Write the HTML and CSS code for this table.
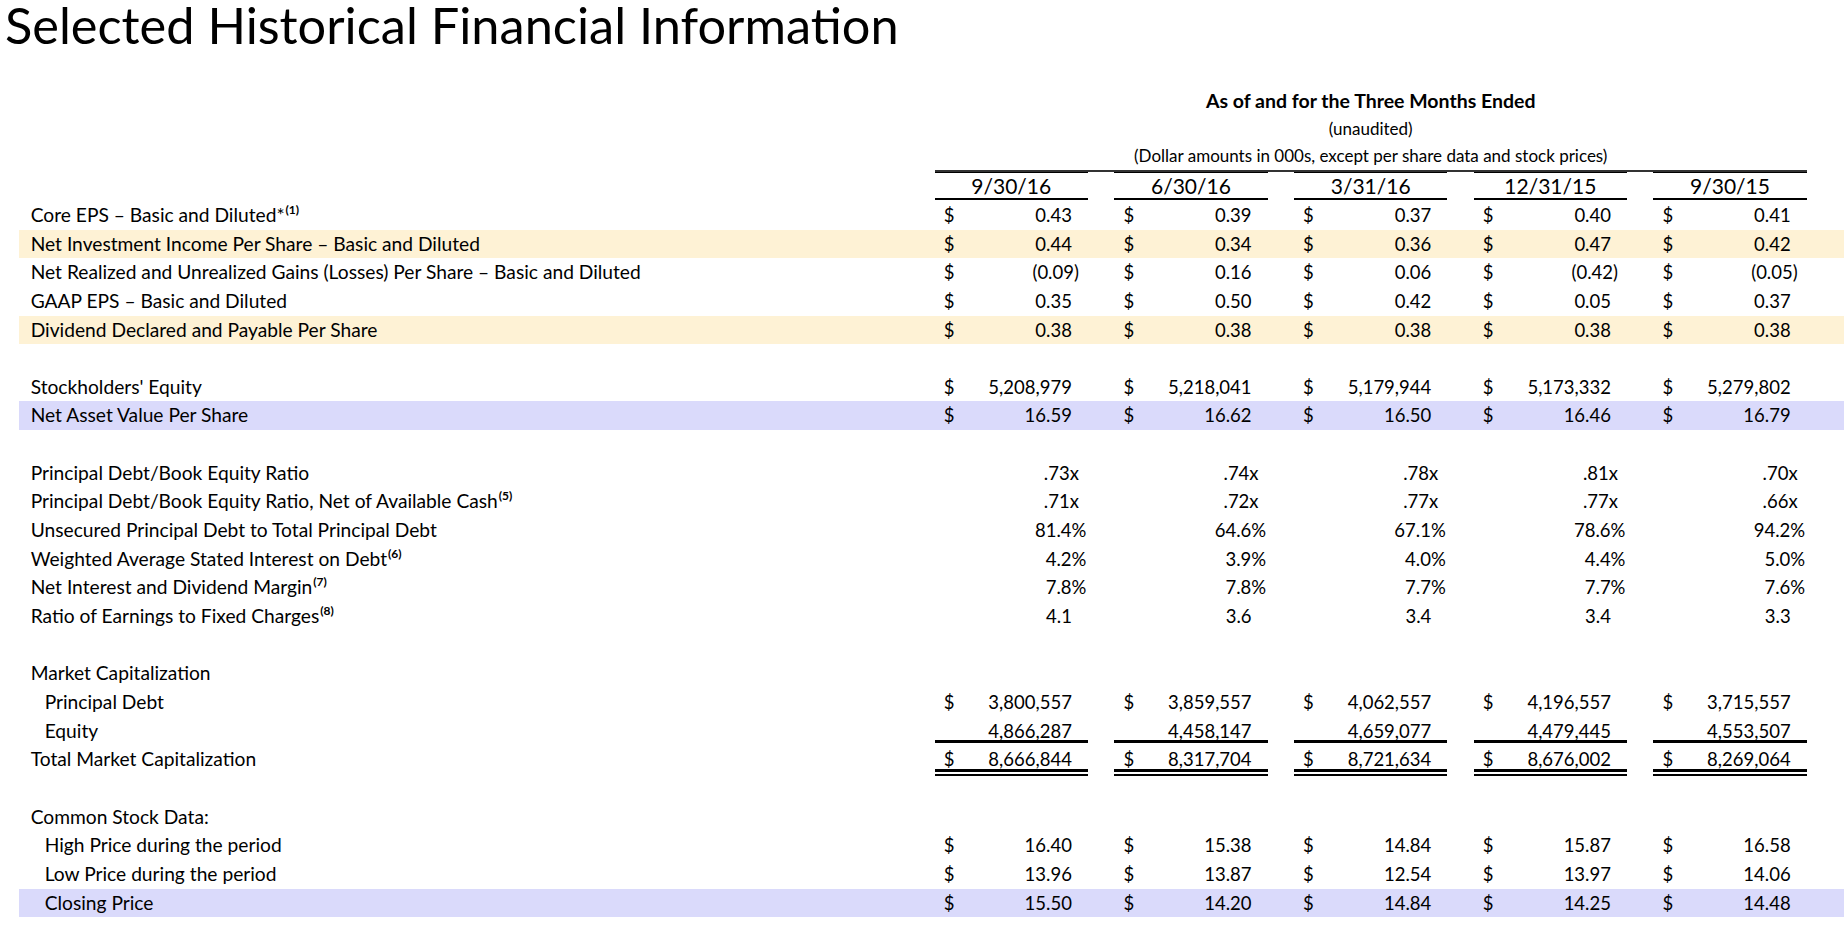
FILE: index.html
```html
<!DOCTYPE html>
<html lang="en">
<head>
<meta charset="utf-8">
<title>Selected Historical Financial Information</title>
<link rel="stylesheet" href="styles.css">
</head>
<body>
<h1 class="title">Selected Historical Financial Information</h1>

<div class="colhead">
  <div class="colhead-main">As of and for the Three Months Ended</div>
  <div class="colhead-sub">(unaudited)</div>
  <div class="colhead-sub rule">(Dollar amounts in 000s, except per share data and stock prices)</div>
  <div class="dates">
    <div class="date">9/30/16</div>
    <div class="date">6/30/16</div>
    <div class="date">3/31/16</div>
    <div class="date">12/31/15</div>
    <div class="date">9/30/15</div>
  </div>
</div>

<div class="table">
  <div class="row">
    <div class="label">Core EPS – Basic and Diluted*<sup>(1)</sup></div>
    <div class="cell"><span>$</span><span class="val">0.43</span></div>
    <div class="cell"><span>$</span><span class="val">0.39</span></div>
    <div class="cell"><span>$</span><span class="val">0.37</span></div>
    <div class="cell"><span>$</span><span class="val">0.40</span></div>
    <div class="cell"><span>$</span><span class="val">0.41</span></div>
  </div>
  <div class="row hl-y">
    <div class="label">Net Investment Income Per Share – Basic and Diluted</div>
    <div class="cell"><span>$</span><span class="val">0.44</span></div>
    <div class="cell"><span>$</span><span class="val">0.34</span></div>
    <div class="cell"><span>$</span><span class="val">0.36</span></div>
    <div class="cell"><span>$</span><span class="val">0.47</span></div>
    <div class="cell"><span>$</span><span class="val">0.42</span></div>
  </div>
  <div class="row">
    <div class="label">Net Realized and Unrealized Gains (Losses) Per Share – Basic and Diluted</div>
    <div class="cell"><span>$</span><span class="val p">(0.09)</span></div>
    <div class="cell"><span>$</span><span class="val">0.16</span></div>
    <div class="cell"><span>$</span><span class="val">0.06</span></div>
    <div class="cell"><span>$</span><span class="val p">(0.42)</span></div>
    <div class="cell"><span>$</span><span class="val p">(0.05)</span></div>
  </div>
  <div class="row">
    <div class="label">GAAP EPS – Basic and Diluted</div>
    <div class="cell"><span>$</span><span class="val">0.35</span></div>
    <div class="cell"><span>$</span><span class="val">0.50</span></div>
    <div class="cell"><span>$</span><span class="val">0.42</span></div>
    <div class="cell"><span>$</span><span class="val">0.05</span></div>
    <div class="cell"><span>$</span><span class="val">0.37</span></div>
  </div>
  <div class="row hl-y">
    <div class="label">Dividend Declared and Payable Per Share</div>
    <div class="cell"><span>$</span><span class="val">0.38</span></div>
    <div class="cell"><span>$</span><span class="val">0.38</span></div>
    <div class="cell"><span>$</span><span class="val">0.38</span></div>
    <div class="cell"><span>$</span><span class="val">0.38</span></div>
    <div class="cell"><span>$</span><span class="val">0.38</span></div>
  </div>
  <div class="row"></div>
  <div class="row">
    <div class="label">Stockholders' Equity</div>
    <div class="cell"><span>$</span><span class="val">5,208,979</span></div>
    <div class="cell"><span>$</span><span class="val">5,218,041</span></div>
    <div class="cell"><span>$</span><span class="val">5,179,944</span></div>
    <div class="cell"><span>$</span><span class="val">5,173,332</span></div>
    <div class="cell"><span>$</span><span class="val">5,279,802</span></div>
  </div>
  <div class="row hl-p">
    <div class="label">Net Asset Value Per Share</div>
    <div class="cell"><span>$</span><span class="val">16.59</span></div>
    <div class="cell"><span>$</span><span class="val">16.62</span></div>
    <div class="cell"><span>$</span><span class="val">16.50</span></div>
    <div class="cell"><span>$</span><span class="val">16.46</span></div>
    <div class="cell"><span>$</span><span class="val">16.79</span></div>
  </div>
  <div class="row"></div>
  <div class="row">
    <div class="label">Principal Debt/Book Equity Ratio</div>
    <div class="cell"><span class="val p">.73x</span></div>
    <div class="cell"><span class="val p">.74x</span></div>
    <div class="cell"><span class="val p">.78x</span></div>
    <div class="cell"><span class="val p">.81x</span></div>
    <div class="cell"><span class="val p">.70x</span></div>
  </div>
  <div class="row">
    <div class="label">Principal Debt/Book Equity Ratio, Net of Available Cash<sup>(5)</sup></div>
    <div class="cell"><span class="val p">.71x</span></div>
    <div class="cell"><span class="val p">.72x</span></div>
    <div class="cell"><span class="val p">.77x</span></div>
    <div class="cell"><span class="val p">.77x</span></div>
    <div class="cell"><span class="val p">.66x</span></div>
  </div>
  <div class="row">
    <div class="label">Unsecured Principal Debt to Total Principal Debt</div>
    <div class="cell"><span class="val pct">81.4%</span></div>
    <div class="cell"><span class="val pct">64.6%</span></div>
    <div class="cell"><span class="val pct">67.1%</span></div>
    <div class="cell"><span class="val pct">78.6%</span></div>
    <div class="cell"><span class="val pct">94.2%</span></div>
  </div>
  <div class="row">
    <div class="label">Weighted Average Stated Interest on Debt<sup>(6)</sup></div>
    <div class="cell"><span class="val pct">4.2%</span></div>
    <div class="cell"><span class="val pct">3.9%</span></div>
    <div class="cell"><span class="val pct">4.0%</span></div>
    <div class="cell"><span class="val pct">4.4%</span></div>
    <div class="cell"><span class="val pct">5.0%</span></div>
  </div>
  <div class="row">
    <div class="label">Net Interest and Dividend Margin<sup>(7)</sup></div>
    <div class="cell"><span class="val pct">7.8%</span></div>
    <div class="cell"><span class="val pct">7.8%</span></div>
    <div class="cell"><span class="val pct">7.7%</span></div>
    <div class="cell"><span class="val pct">7.7%</span></div>
    <div class="cell"><span class="val pct">7.6%</span></div>
  </div>
  <div class="row">
    <div class="label">Ratio of Earnings to Fixed Charges<sup>(8)</sup></div>
    <div class="cell"><span class="val">4.1</span></div>
    <div class="cell"><span class="val">3.6</span></div>
    <div class="cell"><span class="val">3.4</span></div>
    <div class="cell"><span class="val">3.4</span></div>
    <div class="cell"><span class="val">3.3</span></div>
  </div>
  <div class="row"></div>
  <div class="row">
    <div class="label">Market Capitalization</div>
  </div>
  <div class="row">
    <div class="label ind">Principal Debt</div>
    <div class="cell"><span>$</span><span class="val">3,800,557</span></div>
    <div class="cell"><span>$</span><span class="val">3,859,557</span></div>
    <div class="cell"><span>$</span><span class="val">4,062,557</span></div>
    <div class="cell"><span>$</span><span class="val">4,196,557</span></div>
    <div class="cell"><span>$</span><span class="val">3,715,557</span></div>
  </div>
  <div class="row">
    <div class="label ind">Equity</div>
    <div class="cell sub"><span class="val">4,866,287</span></div>
    <div class="cell sub"><span class="val">4,458,147</span></div>
    <div class="cell sub"><span class="val">4,659,077</span></div>
    <div class="cell sub"><span class="val">4,479,445</span></div>
    <div class="cell sub"><span class="val">4,553,507</span></div>
  </div>
  <div class="row">
    <div class="label">Total Market Capitalization</div>
    <div class="cell tot"><span>$</span><span class="val">8,666,844</span></div>
    <div class="cell tot"><span>$</span><span class="val">8,317,704</span></div>
    <div class="cell tot"><span>$</span><span class="val">8,721,634</span></div>
    <div class="cell tot"><span>$</span><span class="val">8,676,002</span></div>
    <div class="cell tot"><span>$</span><span class="val">8,269,064</span></div>
  </div>
  <div class="row"></div>
  <div class="row">
    <div class="label">Common Stock Data:</div>
  </div>
  <div class="row">
    <div class="label ind">High Price during the period</div>
    <div class="cell"><span>$</span><span class="val">16.40</span></div>
    <div class="cell"><span>$</span><span class="val">15.38</span></div>
    <div class="cell"><span>$</span><span class="val">14.84</span></div>
    <div class="cell"><span>$</span><span class="val">15.87</span></div>
    <div class="cell"><span>$</span><span class="val">16.58</span></div>
  </div>
  <div class="row">
    <div class="label ind">Low Price during the period</div>
    <div class="cell"><span>$</span><span class="val">13.96</span></div>
    <div class="cell"><span>$</span><span class="val">13.87</span></div>
    <div class="cell"><span>$</span><span class="val">12.54</span></div>
    <div class="cell"><span>$</span><span class="val">13.97</span></div>
    <div class="cell"><span>$</span><span class="val">14.06</span></div>
  </div>
  <div class="row hl-p">
    <div class="label ind">Closing Price</div>
    <div class="cell"><span>$</span><span class="val">15.50</span></div>
    <div class="cell"><span>$</span><span class="val">14.20</span></div>
    <div class="cell"><span>$</span><span class="val">14.84</span></div>
    <div class="cell"><span>$</span><span class="val">14.25</span></div>
    <div class="cell"><span>$</span><span class="val">14.48</span></div>
  </div>
</div>
</body>
</html>
```

FILE: styles.css
```css
* { box-sizing: border-box; }

html, body {
  margin: 0;
  padding: 0;
  background: #ffffff;
}

body {
  font-family: Lato, "Open Sans", "Liberation Sans", sans-serif;
  color: #000000;
  width: 1844px;
}

.title {
  margin: 0;
  padding-left: 5px;
  font-size: 50.5px;
  font-weight: 400;
  line-height: 49px;
}

.colhead {
  margin: 38px 0 0 934.7px;
  width: 872.1px;
  text-align: center;
}

.colhead-main {
  font-weight: 700;
  font-size: 19.5px;
  line-height: 27.5px;
}

.colhead-sub {
  font-size: 17px;
  line-height: 27.5px;
}

.colhead-sub.rule {
  border-bottom: 2px solid #333333;
}

.dates {
  display: flex;
  gap: 26.5px;
}

.date {
  width: 153.2px;
  flex: none;
  border-top: 1px solid #000000;
  border-bottom: 2px solid #000000;
  font-size: 21px;
  line-height: 25.5px;
  text-align: center;
}

.table {
  margin-top: 0.9px;
}

.row {
  display: flex;
  align-items: flex-start;
  height: 28.66px;
  margin-left: 19px;
}

.row.hl-y { background: #fef2d5; }
.row.hl-p { background: #dadafb; }

.label {
  width: 915.7px;
  flex: none;
  padding-left: 11.7px;
  font-size: 19.2px;
  line-height: 28.66px;
  white-space: nowrap;
}

.label.ind { padding-left: 25.7px; }

.label sup {
  font-size: 12px;
  font-weight: 700;
  line-height: 0;
  vertical-align: 8px;
  margin-left: 1px;
}

.cell {
  width: 153.2px;
  flex: none;
  margin-right: 26.5px;
  display: flex;
  height: 28.66px;
  padding-left: 9px;
  font-size: 18.5px;
  line-height: 28.66px;
  white-space: nowrap;
}

.val {
  margin-left: auto;
  margin-right: 16px;
}

.val.p { margin-right: 9px; }
.val.pct { margin-right: 1.5px; }

.cell.sub {
  height: 26.2px;
  border-bottom: 3px solid #000000;
}

.cell.tot {
  height: 30.66px;
  margin-bottom: -2px;
  border-bottom: 6px double #000000;
  background: linear-gradient(#000000, #000000) left bottom / 100% 1.5px no-repeat;
}
```
